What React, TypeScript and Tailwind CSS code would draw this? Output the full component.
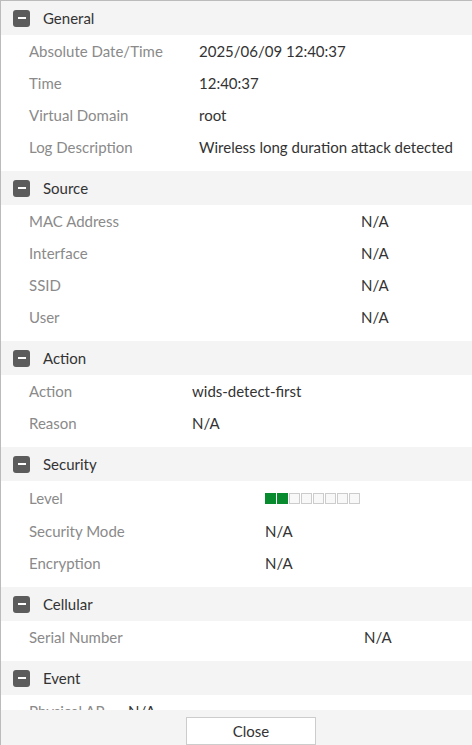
import React from 'react';

type Row = { label: string; value?: string; level?: number };
type Section = { title: string; labelWidth: string; rows: Row[] };

const sections: Section[] = [
  {
    title: 'General',
    labelWidth: 'w-[170px]',
    rows: [
      { label: 'Absolute Date/Time', value: '2025/06/09 12:40:37' },
      { label: 'Time', value: '12:40:37' },
      { label: 'Virtual Domain', value: 'root' },
      { label: 'Log Description', value: 'Wireless long duration attack detected' },
    ],
  },
  {
    title: 'Source',
    labelWidth: 'w-[332px]',
    rows: [
      { label: 'MAC Address', value: 'N/A' },
      { label: 'Interface', value: 'N/A' },
      { label: 'SSID', value: 'N/A' },
      { label: 'User', value: 'N/A' },
    ],
  },
  {
    title: 'Action',
    labelWidth: 'w-[163px]',
    rows: [
      { label: 'Action', value: 'wids-detect-first' },
      { label: 'Reason', value: 'N/A' },
    ],
  },
  {
    title: 'Security',
    labelWidth: 'w-[236px]',
    rows: [
      { label: 'Level', level: 2 },
      { label: 'Security Mode', value: 'N/A' },
      { label: 'Encryption', value: 'N/A' },
    ],
  },
  {
    title: 'Cellular',
    labelWidth: 'w-[335px]',
    rows: [{ label: 'Serial Number', value: 'N/A' }],
  },
  {
    title: 'Event',
    labelWidth: 'w-[99px]',
    rows: [{ label: 'Physical AP', value: 'N/A' }],
  },
];

function MinusIcon() {
  return (
    <span className="flex h-[17px] w-[17px] items-center justify-center rounded-[3px] bg-[#5c5c5c]">
      <span className="h-[2px] w-[8px] bg-white" />
    </span>
  );
}

function LevelBar({ level }: { level: number }) {
  return (
    <div className="flex gap-px">
      {Array.from({ length: 8 }).map((_, i) => (
        <span
          key={i}
          className={
            i < level
              ? 'h-[11px] w-[11px] bg-[#088a2f]'
              : 'h-[11px] w-[11px] border border-[#cccccc] bg-[#f8f8f8]'
          }
        />
      ))}
    </div>
  );
}

export default function App() {
  return (
    <div
      className="flex h-[745px] w-[472px] flex-col overflow-hidden border-l border-t border-[#bbbbbb] bg-white text-[15px] text-[#333333]"
      style={{ fontFamily: 'Lato, "Noto Sans", sans-serif' }}
    >
      <div className="flex-1 overflow-hidden">
        {sections.map((s) => (
          <div key={s.title} className="pb-2">
            <div className="flex h-[34px] items-center bg-[#f4f4f4] pl-[12px]">
              <MinusIcon />
              <span className="ml-[13px]">{s.title}</span>
            </div>
            {s.rows.map((r) => (
              <div key={r.label} className={`flex items-center pl-[28px] ${r.level !== undefined ? 'h-[34px]' : 'h-8'}`}>
                <span className={`${s.labelWidth} shrink-0 text-[#8a8a8a]`}>{r.label}</span>
                {r.level !== undefined ? <LevelBar level={r.level} /> : <span>{r.value}</span>}
              </div>
            ))}
          </div>
        ))}
      </div>
      <div className="flex h-[35px] shrink-0 bg-[#f4f4f4] pl-[185px] pt-[7px]">
        <button
          type="button"
          className="h-[28px] w-[130px] border border-[#cccccc] bg-white text-[15px] text-[#333333]"
        >
          Close
        </button>
      </div>
    </div>
  );
}
